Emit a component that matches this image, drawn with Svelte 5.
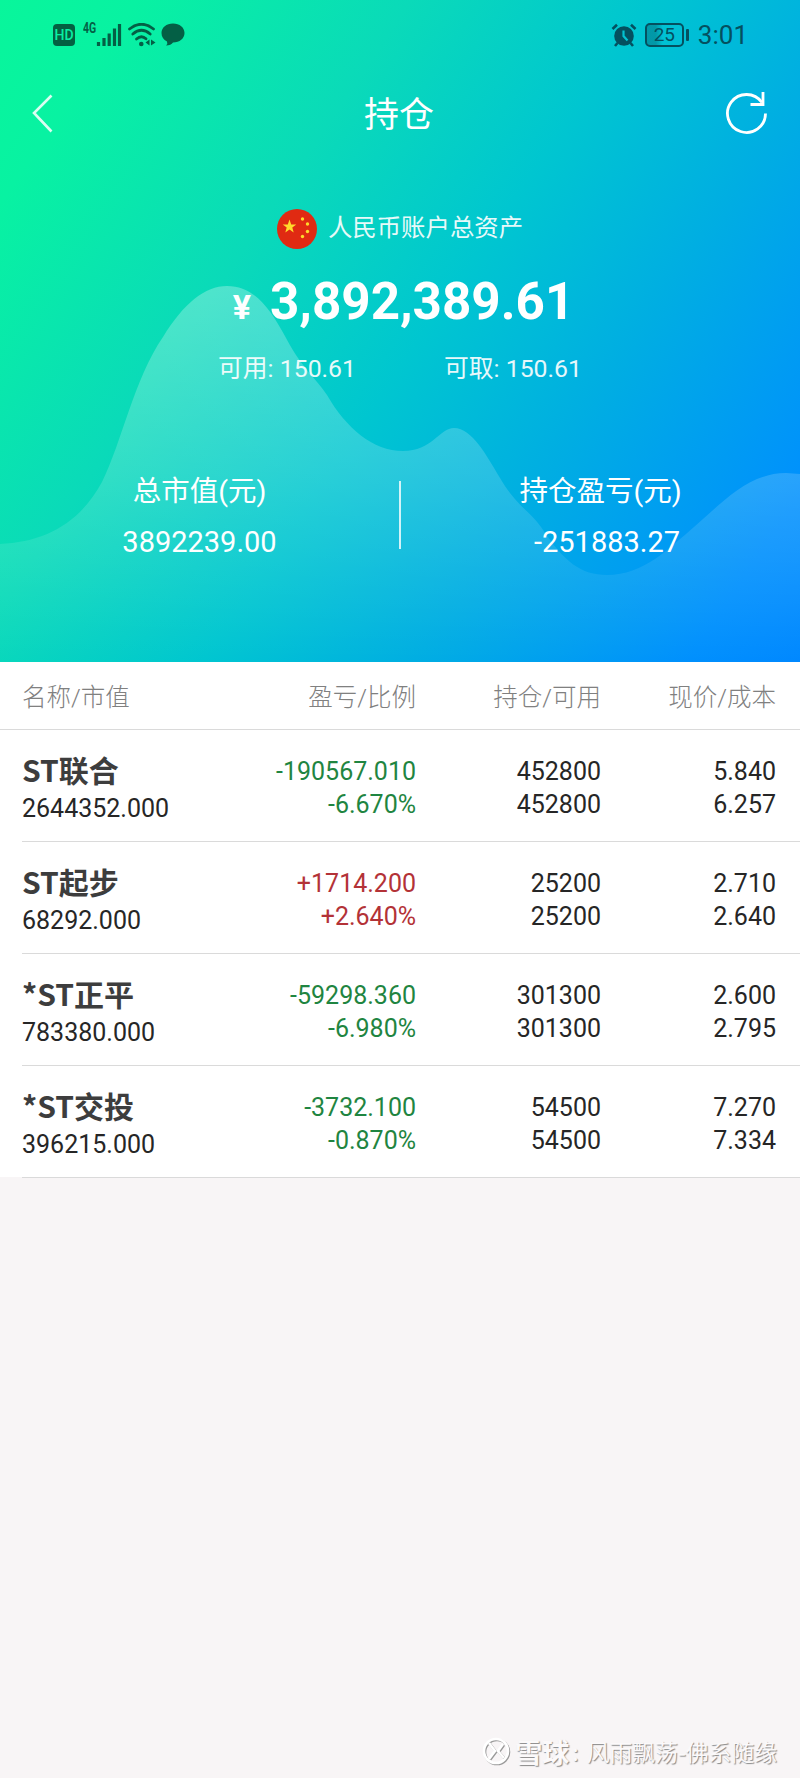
<script>
	const account = {
		label: '人民币账户总资产',
		total: '3,892,389.61',
		available: '150.61',
		withdrawable: '150.61',
		marketValue: '3892239.00',
		profit: '-251883.27'
	};

	const columns = ['名称/市值', '盈亏/比例', '持仓/可用', '现价/成本'];

	const holdings = [
		{
			name: 'ST联合',
			value: '2644352.000',
			profit: '-190567.010',
			ratio: '-6.670%',
			amount: '452800',
			usable: '452800',
			price: '5.840',
			cost: '6.257'
		},
		{
			name: 'ST起步',
			value: '68292.000',
			profit: '+1714.200',
			ratio: '+2.640%',
			amount: '25200',
			usable: '25200',
			price: '2.710',
			cost: '2.640'
		},
		{
			name: '*ST正平',
			value: '783380.000',
			profit: '-59298.360',
			ratio: '-6.980%',
			amount: '301300',
			usable: '301300',
			price: '2.600',
			cost: '2.795'
		},
		{
			name: '*ST交投',
			value: '396215.000',
			profit: '-3732.100',
			ratio: '-0.870%',
			amount: '54500',
			usable: '54500',
			price: '7.270',
			cost: '7.334'
		}
	];

	// red is a gain, green is a loss
	function getTrend(profit) {
		return profit.startsWith('-') ? 'down' : 'up';
	}
</script>

<main class="page">
	<header class="hero">
		<svg class="wave" viewBox="0 0 800 662" aria-hidden="true">
			<defs>
				<linearGradient id="wave-fill" x1="0" y1="285" x2="0" y2="662" gradientUnits="userSpaceOnUse">
					<stop offset="0" stop-color="#fff" stop-opacity="0.28" />
					<stop offset="0.5" stop-color="#fff" stop-opacity="0.16" />
					<stop offset="1" stop-color="#fff" stop-opacity="0" />
				</linearGradient>
			</defs>
			<path
				fill="url(#wave-fill)"
				d="M0 544C45 542 80 523 102 482C122 442 134 379 163 337C184 303 205 286 227 286C253 286 269 306 286 338C303 370 316 378 327 395C346 428 373 451 403 451C432 451 440 428 454 428C472 428 487 456 500 478C517 507 530 511 541 527C564 562 581 575 607 575C644 575 668 549 694 527C722 503 748 473 786 473L800 474V662H0Z"
			/>
		</svg>

		<div class="status-bar">
			<div class="status-left">
				<span class="hd">HD</span>
				<span class="network">4G</span>
				<svg class="signal" width="26" height="24" viewBox="0 0 26 24">
					<path d="M2.5 23v-4M8 23v-8M13.2 23V10.5M18.5 23V5.5M23.5 23V1" stroke="currentColor" stroke-width="3.2" />
				</svg>
				<svg class="wifi" width="28" height="24" viewBox="0 0 28 24">
					<g fill="none" stroke="currentColor" stroke-width="2.8" stroke-linecap="round">
						<path d="M1.5 6Q13.5-3.5 25.5 6" />
						<path d="M4.8 11Q13.5 3.6 22.2 11" />
						<path d="M8.5 16Q13.5 11.5 18 15.8" />
					</g>
					<circle cx="13.3" cy="21" r="2.3" fill="currentColor" />
					<path d="M21.5 16.5v6L17.5 19.5zM23 16.5v6l4.5-3z" fill="currentColor" />
				</svg>
				<svg class="bubble" width="24" height="23" viewBox="0 0 24 23">
					<path d="M12 0.5C18.6 0.5 23.5 4.6 23.5 10S18.6 19.5 12 19.5Q10 22.5 5 22.5Q7 20.5 6 18.5C2.5 16.8 0.5 13.7 0.5 10C0.5 4.6 5.4 0.5 12 0.5Z" fill="currentColor" />
				</svg>
			</div>
			<div class="status-right">
				<svg width="26" height="24" viewBox="0 0 26 24">
					<circle cx="13" cy="13" r="9.8" fill="currentColor" />
					<path d="M1.5 6L6 1.8M20 1.8L24.5 6M6.5 20L4 23M19.5 20L22 23" stroke="currentColor" stroke-width="2.6" />
					<path d="M12.5 7.5V13l4 4.5" fill="none" stroke="#03c1d0" stroke-width="2.2" />
				</svg>
				<div class="battery"><span>25</span></div>
				<div class="battery-tip"></div>
				<span class="clock">3:01</span>
			</div>
		</div>

		<nav class="nav">
			<svg width="24" height="42" viewBox="0 0 24 42">
				<path d="M20.5 2.5L3 20L20.5 38.5" fill="none" stroke="#fff" stroke-opacity="0.85" stroke-width="2.6" />
			</svg>
			<h1>持仓</h1>
			<svg width="44" height="44" viewBox="0 0 44 44">
				<g fill="none" stroke="#fff" stroke-width="2.8">
					<path d="M40.5 21.5A19 19 0 1 1 37 10.5" />
					<path d="M38 0V12.5H25.5" />
				</g>
			</svg>
		</nav>

		<div class="account">
			<svg width="42" height="42" viewBox="0 0 42 42">
				<circle cx="21" cy="21" r="20" fill="#e02a12" />
				<g fill="#ffda2c">
					<path d="M13.5 11.5L15.2 16.4L20.3 16.5L16.3 19.6L17.7 24.5L13.5 21.6L9.3 24.5L10.7 19.6L6.7 16.5L11.8 16.4Z" />
					<circle cx="26.5" cy="11" r="1.7" />
					<circle cx="31.5" cy="16" r="1.7" />
					<circle cx="31.5" cy="23.5" r="1.7" />
					<circle cx="26.5" cy="28.5" r="1.7" />
				</g>
			</svg>
			<span>{account.label}</span>
		</div>

		<div class="total">
			<span class="currency">¥</span>
			<strong>{account.total}</strong>
		</div>

		<div class="funds">
			<span>可用: {account.available}</span>
			<span>可取: {account.withdrawable}</span>
		</div>

		<div class="summary">
			<div class="summary-item">
				<span class="summary-label">总市值(元)</span>
				<span class="summary-value">{account.marketValue}</span>
			</div>
			<div class="divider"></div>
			<div class="summary-item">
				<span class="summary-label">持仓盈亏(元)</span>
				<span class="summary-value profit">{account.profit}</span>
			</div>
		</div>
	</header>

	<section class="list">
		<div class="grid list-head">
			{#each columns as column}
				<span>{column}</span>
			{/each}
		</div>

		{#each holdings as item}
			<div class="grid row">
				<div class="cell">
					<strong>{item.name}</strong>
					<span>{item.value}</span>
				</div>
				<div class="cell {getTrend(item.profit)}">
					<span>{item.profit}</span>
					<span>{item.ratio}</span>
				</div>
				<div class="cell">
					<span>{item.amount}</span>
					<span>{item.usable}</span>
				</div>
				<div class="cell">
					<span>{item.price}</span>
					<span>{item.cost}</span>
				</div>
			</div>
		{/each}
	</section>

	<footer class="watermark">
		<svg width="30" height="30" viewBox="0 0 30 30">
			<g fill="none" stroke-width="2.6">
				<g stroke="#999" transform="translate(1 1)">
					<circle cx="14" cy="14" r="12" />
					<path d="M7 6l6 8-6 8M21 7l-5 7 6 7" />
				</g>
				<g stroke="#fff">
					<circle cx="14" cy="14" r="12" />
					<path d="M7 6l6 8-6 8M21 7l-5 7 6 7" />
				</g>
			</g>
		</svg>
		<strong>雪球</strong>
		<span class="colon">:</span>
		<span>风雨飘荡-佛系随缘</span>
	</footer>
</main>

<style>
	:global(body) {
		margin: 0;
		background: #f8f5f6;
	}

	.page {
		width: 800px;
		height: 1778px;
		display: flex;
		flex-direction: column;
		background: #f8f5f6;
		font-family: Roboto, 'Noto Sans CJK SC', sans-serif;
		overflow: hidden;
	}

	.hero {
		position: relative;
		height: 662px;
		flex: none;
		display: flex;
		flex-direction: column;
		color: #fff;
		background: linear-gradient(124deg, #08f69b 0%, #08f2a2 11%, #0adab9 33%, #00c6d0 52%, #00aee2 69%, #0090fd 91%, #0088ff 100%);
	}

	.wave {
		position: absolute;
		inset: 0;
		width: 800px;
		height: 662px;
	}

	.status-bar,
	.nav,
	.account,
	.total,
	.funds,
	.summary {
		position: relative;
		display: flex;
	}

	.status-bar {
		height: 69px;
		box-sizing: border-box;
		padding: 0 52px 0 53px;
		align-items: center;
		justify-content: space-between;
		color: #045f45;
	}

	.status-left,
	.status-right {
		display: flex;
		align-items: center;
	}

	.status-right {
		color: #04505f;
	}

	.hd {
		width: 22px;
		height: 22px;
		border-radius: 4px;
		background: #046042;
		color: #09f0a4;
		font-size: 14px;
		font-weight: 500;
		line-height: 22px;
		text-align: center;
	}

	.network {
		margin: -14px 0 0 8px;
		font-size: 14px;
		line-height: 12px;
		font-weight: 700;
		transform: scaleX(0.75);
		transform-origin: left;
	}

	.signal {
		margin-left: -5px;
	}

	.wifi {
		margin-left: 6px;
	}

	.bubble {
		margin-left: 5px;
	}

	.battery {
		width: 39px;
		height: 24px;
		box-sizing: border-box;
		margin-left: 8px;
		border: 2px solid currentColor;
		border-radius: 5px;
		text-align: center;
		font-size: 19px;
		line-height: 20px;
		background: linear-gradient(90deg, rgba(4, 88, 104, 0.4) 25%, transparent 45%);
	}

	.battery-tip {
		width: 3px;
		height: 12px;
		margin-left: 2px;
		border-radius: 1px;
		background: currentColor;
	}

	.clock {
		margin-left: 9px;
		font-size: 26px;
	}

	.nav {
		height: 90px;
		padding: 0 31px 0 31px;
		align-items: center;
		justify-content: space-between;
	}

	h1 {
		margin: 4px -9px 0 9px;
		font-size: 35px;
		font-weight: 400;
		line-height: 50px;
	}

	.account {
		height: 42px;
		margin-top: 49px;
		padding-right: 1px;
		align-items: center;
		justify-content: center;
		gap: 10px;
		font-size: 24.4px;
	}

	.account span {
		margin-top: -7px;
		opacity: 0.9;
	}

	.total {
		height: 60px;
		margin-top: 22px;
		padding-left: 7px;
		justify-content: center;
		align-items: baseline;
	}

	.total strong {
		font-size: 51.2px;
		line-height: 60px;
	}

	.currency {
		margin-right: 19px;
		font-size: 34px;
		font-weight: 700;
	}

	.funds {
		height: 36px;
		margin-top: 19px;
		justify-content: center;
		gap: 88px;
		font-size: 24.8px;
		line-height: 36px;
		opacity: 0.9;
	}

	.summary {
		margin-top: 85px;
		align-items: center;
	}

	.summary-item {
		flex: 1;
		display: flex;
		flex-direction: column;
		align-items: center;
		gap: 10px;
	}

	.summary-label {
		font-size: 28.5px;
		line-height: 40px;
	}

	.summary-value {
		font-size: 29px;
		line-height: 40px;
	}

	.profit {
		padding-left: 13px;
	}

	.divider {
		width: 2px;
		height: 68px;
		margin-bottom: 5px;
		background: rgba(255, 255, 255, 0.8);
	}

	.list {
		background: linear-gradient(#fff 0 0) no-repeat 0 0 / 100% 515px;
	}

	.grid {
		display: grid;
		grid-template-columns: 213px 181px 185px 175px;
		box-sizing: border-box;
	}

	.list-head {
		height: 68px;
		padding: 0 23px 0 22px;
		border-bottom: 1px solid #dadada;
		color: #808080;
		font-size: 24.5px;
		font-weight: 300;
		line-height: 72px;
	}

	.row {
		height: 112px;
		margin-left: 22px;
		border-bottom: 1px solid #dadada;
		font-size: 25px;
		line-height: 33px;
		color: #262626;
	}

	.grid > :not(:first-child) {
		text-align: right;
	}

	.cell {
		display: flex;
		flex-direction: column;
		padding-top: 25px;
	}

	.cell:first-child {
		padding-top: 18px;
	}

	.cell strong {
		margin-bottom: 2px;
		font-family: 'Noto Sans CJK SC', sans-serif;
		font-size: 30px;
		line-height: 42px;
		color: #3d3d3d;
	}

	.down {
		color: #1f8541;
	}

	.up {
		color: #b33237;
	}

	.watermark {
		margin-top: auto;
		padding: 0 23px 9px 0;
		display: flex;
		align-items: center;
		justify-content: flex-end;
		color: #fbf9fa;
		font-family: 'Noto Sans CJK SC', sans-serif;
		font-size: 22.8px;
		line-height: 34px;
		text-shadow: 1px 1px 1px #888;
	}

	.watermark strong {
		margin-left: 3px;
		font-size: 27px;
	}

	.colon {
		margin: 0 8px 0 3px;
	}
</style>
